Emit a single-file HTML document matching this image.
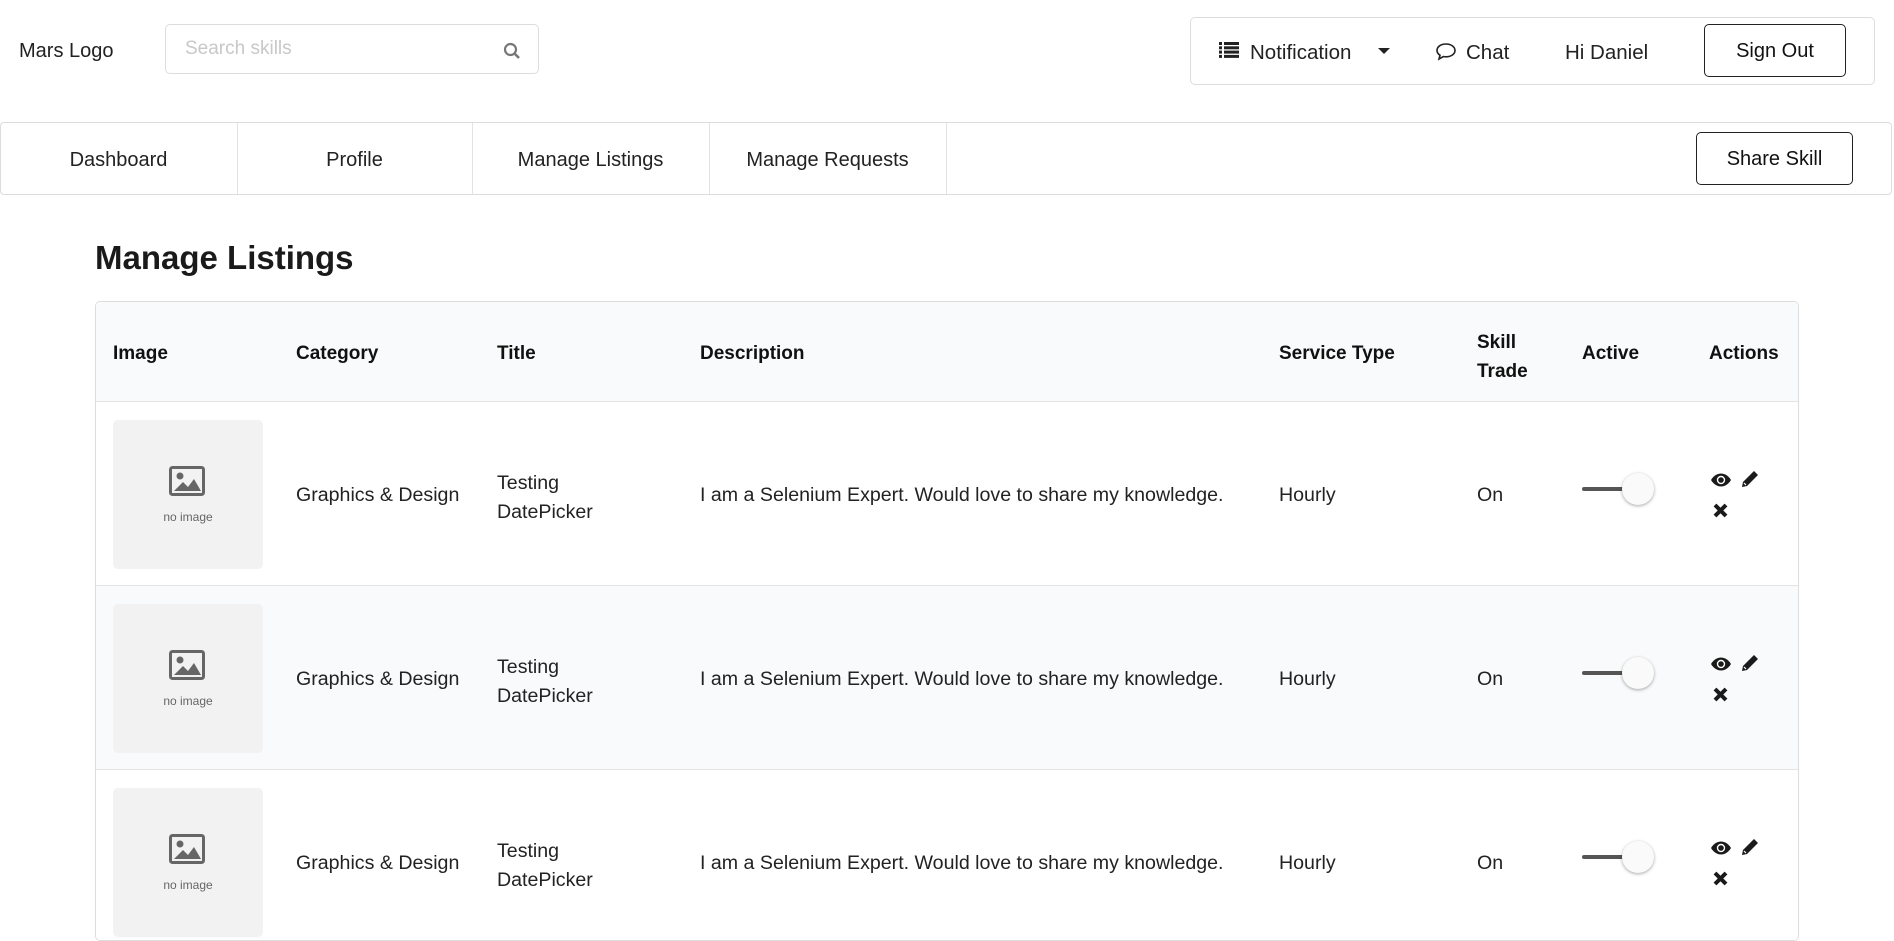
<!DOCTYPE html>
<html><head><meta charset="utf-8"><style>
*{box-sizing:border-box;margin:0;padding:0}
body{width:1894px;height:910px;overflow:hidden;background:#fff;font-family:"Liberation Sans",sans-serif;color:#222;position:relative}
.a{position:absolute;white-space:nowrap}
.btn{position:absolute;border:1px solid #222;border-radius:5px;background:#fff;display:flex;align-items:center;justify-content:center;font-size:20px;color:#111;padding-top:2px}
.tbl{position:absolute;left:95px;top:301px;width:1704px;height:640px;border:1px solid #ddd;border-radius:5px;overflow:hidden}
.hdr{position:absolute;left:0;top:0;width:100%;height:100px;background:#f9fafb;border-bottom:1px solid #e3e3e3}
.row{position:absolute;left:0;width:100%;height:184px;border-bottom:1px solid #e3e3e3}
.th{position:absolute;font-weight:bold;font-size:19px;color:#111}
.td{position:absolute;font-size:19.6px;color:#222;white-space:nowrap}
.img{position:absolute;left:17px;top:18px;width:150px;height:149px;background:#f2f2f2;border-radius:5px}
</style></head><body>
<div class="a" style="left:19px;top:40px;font-size:20px">Mars Logo</div>
<div class="a" style="left:165px;top:24px;width:374px;height:50px;border:1px solid #ddd;border-radius:5px"></div>
<div class="a" style="left:185px;top:38px;font-size:19px;color:#c8c8c8">Search skills</div>
<svg class="a" style="left:503px;top:42px" width="18" height="18" viewBox="0 0 18 18"><circle cx="7.5" cy="7.5" r="5.5" fill="none" stroke="#777" stroke-width="2.2"/><line x1="11.5" y1="11.5" x2="16" y2="16" stroke="#777" stroke-width="2.6"/></svg>
<div class="a" style="left:1190px;top:17px;width:685px;height:68px;border:1px solid #ddd;border-radius:5px"></div>
<svg class="a" style="left:1219px;top:42px" width="20" height="16" viewBox="0 0 20 16"><g fill="#222"><rect x="0" y="0" width="3" height="3"/><rect x="5" y="0" width="15" height="3"/><rect x="0" y="4.3" width="3" height="3"/><rect x="5" y="4.3" width="15" height="3"/><rect x="0" y="8.6" width="3" height="3"/><rect x="5" y="8.6" width="15" height="3"/><rect x="0" y="12.9" width="3" height="3"/><rect x="5" y="12.9" width="15" height="3"/></g></svg>
<div class="a" style="left:1250px;top:41px;font-size:20.5px">Notification</div>
<svg class="a" style="left:1378px;top:48px" width="12" height="7"><polygon points="0,0 12,0 6,6" fill="#222"/></svg>
<svg class="a" style="left:1435px;top:42px" width="22" height="20" viewBox="0 0 22 20"><path d="M11 2C5.5 2 2 5 2 8.5c0 2 1.2 3.6 3 4.7L4 17l4.5-2.5c.8.2 1.6.3 2.5.3 5.5 0 9-3 9-6.3S16.5 2 11 2z" fill="none" stroke="#222" stroke-width="1.6"/></svg>
<div class="a" style="left:1466px;top:41px;font-size:20.5px">Chat</div>
<div class="a" style="left:1565px;top:41px;font-size:20.5px">Hi Daniel</div>
<div class="btn" style="left:1704px;top:24px;width:142px;height:53px">Sign Out</div>
<div class="a" style="left:0;top:122px;width:1892px;height:73px;border:1px solid #ddd;border-radius:4px"></div>
<div class="a" style="left:237px;top:123px;width:1px;height:71px;background:#e3e3e3"></div>
<div class="a" style="left:472px;top:123px;width:1px;height:71px;background:#e3e3e3"></div>
<div class="a" style="left:709px;top:123px;width:1px;height:71px;background:#e3e3e3"></div>
<div class="a" style="left:946px;top:123px;width:1px;height:71px;background:#e3e3e3"></div>
<div class="a" style="left:0;top:149px;width:237px;text-align:center;font-size:20px">Dashboard</div>
<div class="a" style="left:237px;top:149px;width:235px;text-align:center;font-size:20px">Profile</div>
<div class="a" style="left:472px;top:149px;width:237px;text-align:center;font-size:20px">Manage Listings</div>
<div class="a" style="left:709px;top:149px;width:237px;text-align:center;font-size:20px">Manage Requests</div>
<div class="btn" style="left:1696px;top:132px;width:157px;height:53px">Share Skill</div>
<div class="a" style="left:95px;top:239px;font-size:33px;font-weight:bold;color:#1a1a1a">Manage Listings</div>
<div class="tbl">
<div class="hdr">
<div class="th" style="left:17px;top:41px">Image</div>
<div class="th" style="left:200px;top:41px">Category</div>
<div class="th" style="left:401px;top:41px">Title</div>
<div class="th" style="left:604px;top:41px">Description</div>
<div class="th" style="left:1183px;top:41px">Service Type</div>
<div class="th" style="left:1381px;top:26px;line-height:29px">Skill<br>Trade</div>
<div class="th" style="left:1486px;top:41px">Active</div>
<div class="th" style="left:1613px;top:41px">Actions</div>
</div>
<div class="row" style="top:100px;background:#fff">
<div class="img"><svg style="position:absolute;left:56px;top:46px" width="36" height="30" viewBox="0 0 36 30"><rect x="1.5" y="1.5" width="33" height="27" rx="2" fill="none" stroke="#666" stroke-width="3"/><circle cx="11" cy="10" r="3.5" fill="#666"/><path d="M5 25l9-9 5 5 6-8 7 12z" fill="#666"/></svg><div style="position:absolute;left:0;width:150px;top:90px;text-align:center;font-size:12px;color:#666">no image</div></div>
<div class="td" style="left:200px;top:82px">Graphics &amp; Design</div>
<div class="td" style="left:401px;top:67px;line-height:29px">Testing<br>DatePicker</div>
<div class="td" style="left:604px;top:82px">I am a Selenium Expert. Would love to share my knowledge.</div>
<div class="td" style="left:1183px;top:82px">Hourly</div>
<div class="td" style="left:1381px;top:82px">On</div>
<div style="position:absolute;left:1486px;top:85px;width:45px;height:4px;background:#555;border-radius:2px"></div>
<div style="position:absolute;left:1526px;top:71px;width:32px;height:32px;border-radius:50%;background:#fafafa;box-shadow:0 1px 3px rgba(0,0,0,.35)"></div>
<svg style="position:absolute;left:1614px;top:71px" width="22" height="14" viewBox="0 0 22 14"><path d="M1 7C4 2 8 0.5 11 0.5S18 2 21 7c-3 5-7 6.5-10 6.5S4 12 1 7z" fill="#1a1a1a"/><circle cx="11" cy="7" r="4.2" fill="#fff"/><circle cx="11" cy="7" r="2.8" fill="#1a1a1a"/></svg>
<svg style="position:absolute;left:1645px;top:68px" width="18" height="18" viewBox="0 0 18 18"><path d="M13 1l4 4L6 16l-5 1 1-5z" fill="#1a1a1a"/><path d="M3 13l2 2" stroke="#fff" stroke-width="1.2"/></svg>
<svg style="position:absolute;left:1617px;top:101px" width="15" height="15" viewBox="0 0 15 15"><path d="M2 2l11 11M13 2L2 13" stroke="#1a1a1a" stroke-width="4"/></svg>
</div>
<div class="row" style="top:284px;background:#f9fafb">
<div class="img"><svg style="position:absolute;left:56px;top:46px" width="36" height="30" viewBox="0 0 36 30"><rect x="1.5" y="1.5" width="33" height="27" rx="2" fill="none" stroke="#666" stroke-width="3"/><circle cx="11" cy="10" r="3.5" fill="#666"/><path d="M5 25l9-9 5 5 6-8 7 12z" fill="#666"/></svg><div style="position:absolute;left:0;width:150px;top:90px;text-align:center;font-size:12px;color:#666">no image</div></div>
<div class="td" style="left:200px;top:82px">Graphics &amp; Design</div>
<div class="td" style="left:401px;top:67px;line-height:29px">Testing<br>DatePicker</div>
<div class="td" style="left:604px;top:82px">I am a Selenium Expert. Would love to share my knowledge.</div>
<div class="td" style="left:1183px;top:82px">Hourly</div>
<div class="td" style="left:1381px;top:82px">On</div>
<div style="position:absolute;left:1486px;top:85px;width:45px;height:4px;background:#555;border-radius:2px"></div>
<div style="position:absolute;left:1526px;top:71px;width:32px;height:32px;border-radius:50%;background:#fafafa;box-shadow:0 1px 3px rgba(0,0,0,.35)"></div>
<svg style="position:absolute;left:1614px;top:71px" width="22" height="14" viewBox="0 0 22 14"><path d="M1 7C4 2 8 0.5 11 0.5S18 2 21 7c-3 5-7 6.5-10 6.5S4 12 1 7z" fill="#1a1a1a"/><circle cx="11" cy="7" r="4.2" fill="#fff"/><circle cx="11" cy="7" r="2.8" fill="#1a1a1a"/></svg>
<svg style="position:absolute;left:1645px;top:68px" width="18" height="18" viewBox="0 0 18 18"><path d="M13 1l4 4L6 16l-5 1 1-5z" fill="#1a1a1a"/><path d="M3 13l2 2" stroke="#fff" stroke-width="1.2"/></svg>
<svg style="position:absolute;left:1617px;top:101px" width="15" height="15" viewBox="0 0 15 15"><path d="M2 2l11 11M13 2L2 13" stroke="#1a1a1a" stroke-width="4"/></svg>
</div>
<div class="row" style="top:468px;background:#fff">
<div class="img"><svg style="position:absolute;left:56px;top:46px" width="36" height="30" viewBox="0 0 36 30"><rect x="1.5" y="1.5" width="33" height="27" rx="2" fill="none" stroke="#666" stroke-width="3"/><circle cx="11" cy="10" r="3.5" fill="#666"/><path d="M5 25l9-9 5 5 6-8 7 12z" fill="#666"/></svg><div style="position:absolute;left:0;width:150px;top:90px;text-align:center;font-size:12px;color:#666">no image</div></div>
<div class="td" style="left:200px;top:82px">Graphics &amp; Design</div>
<div class="td" style="left:401px;top:67px;line-height:29px">Testing<br>DatePicker</div>
<div class="td" style="left:604px;top:82px">I am a Selenium Expert. Would love to share my knowledge.</div>
<div class="td" style="left:1183px;top:82px">Hourly</div>
<div class="td" style="left:1381px;top:82px">On</div>
<div style="position:absolute;left:1486px;top:85px;width:45px;height:4px;background:#555;border-radius:2px"></div>
<div style="position:absolute;left:1526px;top:71px;width:32px;height:32px;border-radius:50%;background:#fafafa;box-shadow:0 1px 3px rgba(0,0,0,.35)"></div>
<svg style="position:absolute;left:1614px;top:71px" width="22" height="14" viewBox="0 0 22 14"><path d="M1 7C4 2 8 0.5 11 0.5S18 2 21 7c-3 5-7 6.5-10 6.5S4 12 1 7z" fill="#1a1a1a"/><circle cx="11" cy="7" r="4.2" fill="#fff"/><circle cx="11" cy="7" r="2.8" fill="#1a1a1a"/></svg>
<svg style="position:absolute;left:1645px;top:68px" width="18" height="18" viewBox="0 0 18 18"><path d="M13 1l4 4L6 16l-5 1 1-5z" fill="#1a1a1a"/><path d="M3 13l2 2" stroke="#fff" stroke-width="1.2"/></svg>
<svg style="position:absolute;left:1617px;top:101px" width="15" height="15" viewBox="0 0 15 15"><path d="M2 2l11 11M13 2L2 13" stroke="#1a1a1a" stroke-width="4"/></svg>
</div>
</div>
</body></html>
